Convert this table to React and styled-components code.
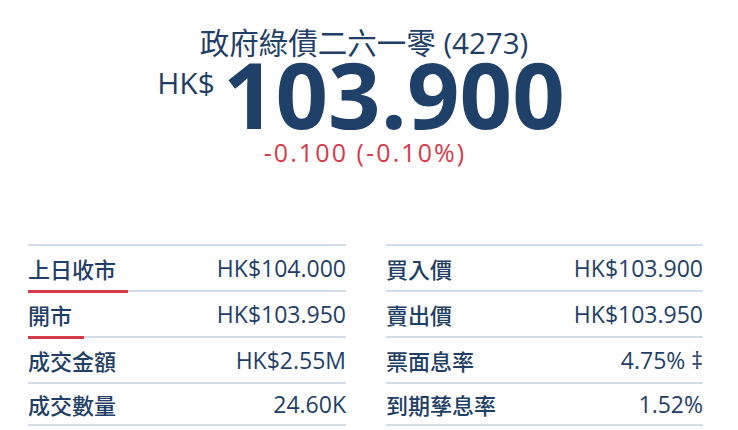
import styled, { createGlobalStyle } from 'styled-components';

const GlobalStyle = createGlobalStyle`
    html, body {
        margin: 0;
        padding: 0;
        background: #ffffff;
    }
    body {
        font-family: "Open Sans", "Noto Sans CJK TC", sans-serif;
        color: #1f3f66;
    }
`

const Page = styled.div`
    width: 738px;
    height: 430px;
    overflow: hidden;
`

const Header = styled.header`
    display: flex;
    flex-direction: column;
    align-items: center;
    padding-top: 27px;
`

const Title = styled.h1`
    margin: 0 0 0 -10px;
    font-size: 29.5px;
    font-weight: 400;
    line-height: 32px;
    color: #1f3f66;
`

const PriceRow = styled.div`
    display: flex;
    align-items: flex-start;
    margin-left: -16px;
`

const Currency = styled.span`
    font-size: 30px;
    line-height: 1;
    margin-top: 9px;
    margin-right: 8px;
`

const Price = styled.span`
    font-size: 92px;
    font-weight: 700;
    line-height: 70px;
    color: #1f4068;
`

const Change = styled.div`
    margin: 8px 0 0 -8px;
    font-size: 25px;
    line-height: 30px;
    letter-spacing: 2.1px;
    color: #d63a4a;
`

const Tables = styled.section`
    display: grid;
    grid-template-columns: 318px 317px;
    column-gap: 40px;
    margin: 77px 0 0 28px;
`

const Table = styled.div`
    border-top: 2px solid #d3dde7;
`

const Row = styled.div`
    display: flex;
    justify-content: space-between;
    align-items: stretch;
    height: 44px;
    border-bottom: 2px solid #d3dde7;

    &:last-child {
        height: 40px;
    }
`

const Label = styled.span`
    display: flex;
    align-items: center;
    padding-right: 12px;
    font-family: "Noto Sans CJK TC", sans-serif;
    font-size: 22px;
    font-weight: 500;
    color: #1f3f66;
    ${p => p.$marked && `
        border-bottom: 3px solid #d63a4a;
        margin-bottom: -3px;
    `}
`

const Value = styled.span`
    display: flex;
    align-items: center;
    font-size: 23px;
    color: #1f3f66;
`

const left = [
    { label: '上日收市', value: 'HK$104.000', marked: true },
    { label: '開市', value: 'HK$103.950', marked: true },
    { label: '成交金額', value: 'HK$2.55M' },
    { label: '成交數量', value: '24.60K' },
];

const right = [
    { label: '買入價', value: 'HK$103.900' },
    { label: '賣出價', value: 'HK$103.950' },
    { label: '票面息率', value: '4.75% ‡' },
    { label: '到期孳息率', value: '1.52%' },
];

function QuoteTable({ rows }) {
    return (
        <Table>
            {rows.map(r => (
                <Row key={r.label}>
                    <Label $marked={r.marked}>{r.label}</Label>
                    <Value>{r.value}</Value>
                </Row>
            ))}
        </Table>
    )
}

export default function App() {
    return (
        <>
            <GlobalStyle />
            <Page>
                <Header>
                    <Title>政府綠債二六一零 (4273)</Title>
                    <PriceRow>
                        <Currency>HK$</Currency>
                        <Price>103.900</Price>
                    </PriceRow>
                    <Change>-0.100 (-0.10%)</Change>
                </Header>
                <Tables>
                    <QuoteTable rows={left} />
                    <QuoteTable rows={right} />
                </Tables>
            </Page>
        </>
    )
}
